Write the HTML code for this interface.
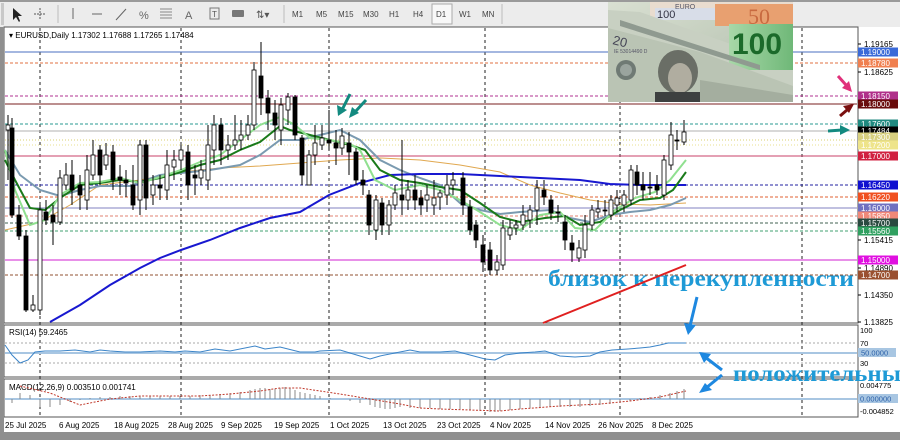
<!DOCTYPE html>
<html><head><meta charset="utf-8"><style>
html,body{margin:0;padding:0;width:900px;height:440px;overflow:hidden;background:#8c8c8c;font-family:"Liberation Sans",sans-serif}
svg{display:block}
</style></head><body>
<svg id="s" width="900" height="440" xmlns="http://www.w3.org/2000/svg" font-family="Liberation Sans, sans-serif">
<defs>
<linearGradient id="bill" x1="0" y1="0" x2="1" y2="1"><stop offset="0" stop-color="#d9e0d2"/><stop offset="0.5" stop-color="#c3cdbd"/><stop offset="1" stop-color="#aab5a6"/></linearGradient>
<linearGradient id="eur" x1="0" y1="0" x2="1" y2="0"><stop offset="0" stop-color="#a8d8a8"/><stop offset="1" stop-color="#6fb878"/></linearGradient>
</defs>
<rect x="0" y="0" width="900" height="440" fill="#8f8f8f"/>
<!-- toolbar -->
<rect x="0" y="0" width="900" height="27" fill="#ececec"/>
<rect x="0" y="0" width="900" height="2" fill="#9a9a9a"/>
<rect x="1" y="3" width="3" height="22" fill="#c8c8c8"/>
<path d="M13 8 L13 20 L16 17 L19 22 L20 21 L18 16 L22 16 Z" fill="#222"/>
<path d="M40 8V20M34 14H46" stroke="#555" stroke-width="1" stroke-dasharray="2,1"/>
<line x1="58" y1="5" x2="58" y2="23" stroke="#bbb"/>
<line x1="73" y1="8" x2="73" y2="19" stroke="#666"/>
<line x1="92" y1="14" x2="102" y2="14" stroke="#666"/>
<line x1="116" y1="20" x2="126" y2="9" stroke="#666"/>
<text x="139" y="19" font-size="11" fill="#666">%</text>
<g stroke="#888"><line x1="160" y1="9" x2="172" y2="9"/><line x1="160" y1="12" x2="172" y2="12"/><line x1="160" y1="15" x2="172" y2="15"/><line x1="160" y1="18" x2="172" y2="18"/></g>
<text x="185" y="19" font-size="11" fill="#666">A</text>
<rect x="210" y="8" width="9" height="11" fill="none" stroke="#777"/><text x="212" y="17" font-size="8" fill="#555">T</text>
<rect x="232" y="10" width="12" height="7" rx="1" fill="#777"/>
<text x="256" y="18" font-size="10" fill="#555">⇅▾</text>
<line x1="284" y1="5" x2="284" y2="23" stroke="#bbb"/>
<g font-size="8" fill="#444">
<text x="292" y="17">M1</text><text x="316" y="17">M5</text><text x="338" y="17">M15</text><text x="363" y="17">M30</text><text x="389" y="17">H1</text><text x="413" y="17">H4</text>
<rect x="432" y="4" width="20" height="20" fill="#f8f8f8" stroke="#aaa"/>
<text x="436" y="17">D1</text><text x="459" y="17">W1</text><text x="482" y="17">MN</text></g>
<line x1="502" y1="4" x2="502" y2="24" stroke="#bbb"/>
<!-- main panes -->
<rect x="4" y="27" width="896" height="405" fill="#fff"/>
<rect x="4" y="27" width="854" height="296" fill="#fff" stroke="#555"/>
<rect x="4" y="325" width="854" height="52" fill="#fff" stroke="#555"/>
<rect x="4" y="379" width="854" height="38" fill="#fff" stroke="#555"/>
<rect x="0" y="432" width="900" height="8" fill="#8f8f8f"/>
<rect x="0" y="27" width="4" height="405" fill="#8f8f8f"/>
<g id="grid" stroke="#222" stroke-width="1" stroke-dasharray="3,3"></g>
<g id="levels"></g>
<g id="mas" fill="none"></g>
<g id="candles"></g>
<!-- money image -->
<g>
<rect x="608" y="2" width="185" height="100" fill="url(#bill)"/>
<rect x="650" y="2" width="143" height="16" fill="#e9dccf"/>
<rect x="655" y="8" width="60" height="12" fill="#d8dde8"/>
<text x="657" y="18" font-size="11" fill="#334">100</text>
<text x="675" y="9" font-size="7" fill="#556">EURO</text>
<rect x="715" y="4" width="78" height="22" fill="#e8a070"/>
<text x="748" y="24" font-size="22" fill="#c86a40" font-family="Liberation Serif, serif">50</text>
<polygon points="608,10 640,12 793,66 793,102 608,102" fill="#c8d0c2"/>
<rect x="729" y="24" width="64" height="46" fill="url(#eur)"/>
<text x="732" y="54" font-size="30" fill="#1b6a2a" font-weight="bold">100</text>
<polygon points="608,28 700,52 793,86 793,102 608,102" fill="#bac4b4"/>
<polygon points="620,20 760,65 760,70 620,26" fill="#8f9a90"/>
<text x="612" y="44" font-size="13" fill="#445" transform="rotate(14 612 44)">20</text>
<text x="614" y="53" font-size="5" fill="#556">IE 53014490 D</text>
<circle cx="626" cy="70" r="10" fill="#6f7a74"/><circle cx="626" cy="70" r="6" fill="#9aa49e"/>
<ellipse cx="678" cy="72" rx="20" ry="22" fill="#6a6e66"/>
<ellipse cx="680" cy="78" rx="12" ry="15" fill="#b0ada0"/>
<rect x="655" y="92" width="45" height="10" fill="#3d4040"/>
<polygon points="700,80 793,95 793,102 700,102" fill="#a4ae9f"/>
</g>
<!-- right axis -->
<g id="axis" font-size="8"></g>
<!-- RSI -->
<text x="9" y="335" font-size="8" fill="#000">RSI(14) 59.2465</text>
<line x1="5" y1="343" x2="857" y2="343" stroke="#aaa" stroke-dasharray="2,2"/>
<line x1="5" y1="363" x2="857" y2="363" stroke="#aaa" stroke-dasharray="2,2"/>
<line x1="5" y1="353" x2="857" y2="353" stroke="#a8c6e2" stroke-width="2"/>
<polyline fill="none" stroke="#3b84c8" stroke-width="1" points="5,345 12,355 20,363 28,360 35,352 45,351 60,351 75,350 90,352 100,350 110,351 125,352 140,352 160,351 175,352 185,351 200,352 215,349 230,351 255,346 265,349 280,347 300,352 315,352 320,351 340,350 360,356 370,359 380,356 400,352 410,350 420,352 440,352 455,351 470,355 485,359 495,360 505,355 520,353 535,352 545,351 560,356 575,357 590,356 600,352 612,350 628,349 640,348 650,347 660,345 668,343 676,343 686,343"/>
<text x="860" y="333" font-size="7.5" fill="#000">100</text>
<text x="860" y="346" font-size="7.5" fill="#000">70</text>
<rect x="858" y="348" width="38" height="9" fill="#a8c6e2"/>
<text x="861" y="355.5" font-size="7.5" fill="#2a5fa8">50.0000</text>
<text x="860" y="366" font-size="7.5" fill="#000">30</text>
<!-- MACD -->
<text x="9" y="390" font-size="8" fill="#000">MACD(12,26,9) 0.003510 0.001741</text>
<line x1="5" y1="399" x2="857" y2="399" stroke="#a8c6e2" stroke-width="2"/>
<g id="macd" stroke="#888"></g>
<polyline fill="none" stroke="#c0392b" stroke-dasharray="2,1.5" points="20,386 50,393 80,405 110,399 140,396 170,396 200,396 230,394 260,391 280,388 300,388 320,391 340,394 370,399 400,404 420,408 440,409 470,410 500,411 520,409 560,406 600,404 630,401 660,397 686,391"/>
<text x="860" y="388" font-size="7.5" fill="#000">0.004775</text>
<rect x="858" y="394" width="40" height="9" fill="#a8c6e2"/>
<text x="860" y="401.5" font-size="7.5" fill="#2a5fa8">0.000000</text>
<text x="860" y="414" font-size="7.5" fill="#000">-0.004852</text>
<!-- dates -->
<g font-size="8" fill="#000">
<text x="5" y="428">25 Jul 2025</text><text x="59" y="428">6 Aug 2025</text><text x="114" y="428">18 Aug 2025</text><text x="168" y="428">28 Aug 2025</text><text x="221" y="428">9 Sep 2025</text><text x="274" y="428">19 Sep 2025</text><text x="330" y="428">1 Oct 2025</text><text x="383" y="428">13 Oct 2025</text><text x="437" y="428">23 Oct 2025</text><text x="490" y="428">4 Nov 2025</text><text x="545" y="428">14 Nov 2025</text><text x="598" y="428">26 Nov 2025</text><text x="652" y="428">8 Dec 2025</text>
</g>
<!-- annotations -->
<text x="548" y="286" font-size="23" font-weight="bold" fill="#1e9ad6" font-family="Liberation Serif, serif" textLength="306" lengthAdjust="spacingAndGlyphs">близок к перекупленности</text>
<text x="733" y="381" font-size="23" font-weight="bold" fill="#1e9ad6" font-family="Liberation Serif, serif" textLength="168" lengthAdjust="spacingAndGlyphs">положительны</text>
<line x1="543" y1="323" x2="686" y2="265" stroke="#e02020" stroke-width="2"/>
<g stroke="#1e88e0" stroke-width="3" fill="#1e88e0">
<line x1="697" y1="297" x2="690" y2="326"/><polygon points="684,323 696,325 688,335" stroke="none"/>
<line x1="722" y1="370" x2="705" y2="357"/><polygon points="699,352 711,354 704,363" stroke="none"/>
<line x1="722" y1="375" x2="706" y2="388"/><polygon points="699,393 705,383 712,390" stroke="none"/>
</g>
<g stroke="#138a80" stroke-width="3" fill="#138a80">
<line x1="350" y1="94" x2="342" y2="110"/><polygon points="338,116 337,105 347,110" stroke="none"/>
<line x1="366" y1="100" x2="355" y2="112"/><polygon points="349,118 352,107 359,113" stroke="none"/>
<line x1="828" y1="131" x2="842" y2="130"/><polygon points="850,130 840,125 840,135" stroke="none"/>
</g>
<g stroke-width="3">
<line x1="838" y1="76" x2="846" y2="85" stroke="#e0307a"/><polygon points="852,92 842,88 849,81" fill="#e0307a"/>
<line x1="840" y1="116" x2="847" y2="110" stroke="#7a1010"/><polygon points="854,104 843,106 849,113" fill="#7a1010"/>
</g>
<text x="9" y="38" font-size="8" fill="#000">▾ EURUSD,Daily  1.17302 1.17688 1.17265 1.17484</text>
</svg>
<script>
var NS="http://www.w3.org/2000/svg";
function el(p,t,a){var e=document.createElementNS(NS,t);for(var k in a)e.setAttribute(k,a[k]);p.appendChild(e);return e;}
var grid=document.getElementById('grid');
[40,181,329,485,620,802].forEach(function(x){el(grid,'line',{x1:x,y1:28,x2:x,y2:417});});
var lv=document.getElementById('levels');
var L=[[52,'#4a6fc0',''],[63,'#e07040','3,2'],[96,'#b03090','3,2'],[104,'#7a1f1f',''],[124,'#2a9a90','3,2'],[131,'#b0b0b0',''],[140,'#d8d070','1,2'],[145,'#e8e090','1,2'],[156,'#c8406a',''],[185,'#2020a0','3,2'],[197,'#e06030','3,2'],[208,'#8080c0',''],[216,'#e08070','3,2'],[223,'#406050','3,2'],[231,'#40a070','3,2'],[260,'#d020d0',''],[275,'#905030','3,2']];
L.forEach(function(l){var a={x1:5,y1:l[0],x2:857,y2:l[0],stroke:l[1]};if(l[2])a['stroke-dasharray']=l[2];el(lv,'line',a);});
var mas=document.getElementById('mas');
function pl(pts,c,w){el(mas,'polyline',{points:pts,stroke:c,'stroke-width':w});}
pl("5,230 40,222 70,205 100,185 140,180 181,172 220,168 260,166 300,163 340,160 380,158 420,160 460,165 500,172 530,185 560,193 590,200 620,204 650,205 686,203",'#e0a850',1);
pl("5,150 20,175 40,190 60,196 80,190 100,186 130,186 160,175 181,173 210,170 240,165 260,155 280,140 300,140 320,135 340,130 360,140 380,160 400,170 420,178 440,185 460,203 480,210 500,214 520,212 550,210 570,218 590,222 610,215 630,212 650,210 670,205 686,198",'#7a9ab0',2);
pl("50,322 80,305 110,285 140,268 160,258 181,250 210,240 240,228 270,218 300,212 329,195 360,183 390,175 420,174 460,174 500,176 540,178 580,180 610,184 640,185 686,185",'#1818d0',2);
pl("5,160 15,180 30,208 45,210 60,198 80,185 100,183 120,180 140,182 160,178 181,172 200,165 220,160 240,150 260,142 280,126 290,130 310,135 330,140 350,145 365,150 380,170 400,180 420,183 440,187 460,190 480,203 500,217 520,222 545,218 565,216 580,225 600,222 620,210 640,200 660,198 673,190 686,172",'#1a7a1a',2);
pl("5,150 15,190 30,225 45,220 60,195 80,183 100,182 120,178 140,183 160,177 181,170 200,162 220,155 240,140 260,125 280,117 295,125 310,138 330,140 350,144 360,150 375,180 395,190 420,185 440,190 460,200 480,212 500,225 520,230 540,215 560,212 575,228 595,230 615,210 635,198 655,192 670,180 686,160",'#90e090',2);
var C=[[8,130,125,115,180],[12,128,215,118,218],[19,215,236,205,240],[26,236,310,230,312],[33,310,305,295,312],[40,310,210,205,315],[46,212,220,200,225],[53,215,222,205,245],[60,222,178,170,225],[66,185,175,163,190],[72,175,190,160,205],[80,185,195,175,210],[87,200,170,155,210],[93,175,155,140,180],[100,150,175,145,185],[106,165,155,143,170],[113,152,180,145,190],[120,177,180,165,195],[126,180,183,170,197],[133,185,205,165,210],[140,200,145,140,215],[146,145,198,140,210],[153,195,185,175,205],[160,185,188,175,200],[167,190,165,150,200],[174,167,160,150,180],[181,160,150,145,170],[188,152,185,145,200],[195,175,178,165,195],[201,178,170,160,185],[208,180,145,125,190],[214,150,125,115,165],[221,125,150,118,165],[228,150,145,135,160],[235,145,140,115,150],[241,140,135,120,150],[248,135,125,115,140],[254,125,70,62,130],[261,76,98,42,115],[268,98,113,90,130],[275,113,125,100,140],[281,130,105,98,145],[288,110,97,93,125],[295,97,135,95,140],[302,138,175,135,185],[309,185,155,150,185],[315,155,143,125,165],[322,145,138,125,150],[329,140,143,110,150],[336,143,148,130,165],[342,148,136,128,155],[349,143,152,132,175],[356,152,180,148,185],[363,180,185,170,195],[369,195,225,190,235],[376,230,200,195,240],[382,203,225,198,235],[389,225,205,200,235],[395,205,193,185,210],[402,195,200,140,215],[408,200,190,180,210],[415,190,200,175,210],[421,198,205,190,215],[427,200,195,185,212],[434,205,198,180,215],[440,197,193,190,210],[447,195,185,175,205],[453,185,180,172,195],[463,178,205,172,215],[470,207,230,200,235],[476,225,240,220,248],[483,245,262,235,272],[490,250,270,242,275],[497,270,262,255,275],[503,265,228,220,270],[510,235,228,220,240],[516,228,225,220,235],[523,225,215,205,230],[530,220,210,205,228],[537,210,188,180,225],[544,190,197,180,205],[551,200,213,195,220],[558,212,212,205,222],[565,222,240,215,250],[572,243,250,235,262],[579,258,248,240,262],[585,250,225,215,258],[592,225,210,205,230],[598,212,209,200,218],[605,210,210,200,216],[611,215,200,195,220],[617,205,198,190,212],[624,205,195,190,212],[631,200,170,165,205],[637,172,185,165,195],[643,185,190,172,200],[650,187,188,172,195],[657,185,190,175,195],[664,195,160,155,200],[671,165,135,122,170],[677,140,140,130,150],[684,142,132,120,145]];
var cg=document.getElementById('candles');
C.forEach(function(c){var x=c[0],o=c[1],cl=c[2],h=c[3],l=c[4];
el(cg,'line',{x1:x,y1:h,x2:x,y2:l,stroke:'#000','stroke-width':1});
var t=Math.min(o,cl),b=Math.max(o,cl);if(b-t<1)b=t+1;
el(cg,'rect',{x:x-2,y:t,width:4,height:b-t,fill:cl<o?'#fff':'#000',stroke:'#000','stroke-width':0.8});});
var ax=document.getElementById('axis');
[[44,'1.19165'],[72,'1.18625'],[240,'1.15415'],[268,'1.14890'],[295,'1.14350'],[322,'1.13825']].forEach(function(a){el(ax,'line',{x1:858,y1:a[0],x2:861,y2:a[0],stroke:'#000'});var t=el(ax,'text',{x:864,y:a[0]+3,fill:'#000'});t.textContent=a[1];});
[[52,'1.19000','#3a6ad8','#fff'],[63,'1.18780','#f08050','#fff'],[96,'1.18150','#b0308a','#fff'],[104,'1.18000','#6a0c0c','#fff'],[124,'1.17600','#208a80','#fff'],[131,'1.17484','#000','#fff'],[137,'1.17300','#d8d080','#fff'],[145,'1.17200','#eee48a','#fff'],[156,'1.17000','#d02040','#fff'],[185,'1.16450','#1010d0','#fff'],[197,'1.16220','#f05020','#fff'],[208,'1.16000','#7070c0','#fff'],[216,'1.15850','#f08878','#fff'],[223,'1.15700','#2a4a40','#fff'],[231,'1.15560','#30a060','#fff'],[260,'1.15000','#e010e0','#fff'],[275,'1.14700','#9a5030','#fff']].forEach(function(a){el(ax,'rect',{x:858,y:a[0]-4.5,width:40,height:9,fill:a[2]});var t=el(ax,'text',{x:861,y:a[0]+3,fill:a[3]});t.textContent=a[1];});
var mg=document.getElementById('macd');
var hv=[[12,-4],[20,6],[30,4],[40,-8],[50,-8],[60,-6],[70,-3],[80,-1],[90,1],[100,2],[110,2],[120,3],[130,3],[140,3],[150,3],[160,3],[170,3],[180,3],[190,3],[200,4],[210,4],[220,5],[230,6],[240,7],[250,9],[255,10],[260,11],[265,11],[270,10],[275,10],[280,11],[285,12],[290,11],[295,9],[300,7],[305,6],[310,5],[315,4],[320,3],[330,1],[340,0],[350,-2],[360,-4],[370,-6],[375,-8],[380,-9],[385,-10],[390,-10],[395,-9],[400,-8],[410,-9],[420,-9],[430,-9],[440,-10],[450,-10],[460,-10],[470,-11],[480,-12],[490,-13],[495,-13],[500,-12],[510,-11],[520,-10],[530,-9],[540,-9],[550,-8],[560,-8],[570,-8],[580,-8],[590,-7],[600,-6],[610,-5],[620,-4],[630,-2],[640,1],[650,2],[660,4],[670,6],[677,8],[684,10]];
hv.forEach(function(h){el(mg,'line',{x1:h[0],y1:399,x2:h[0],y2:399-h[1]});});
</script>
</body></html>
